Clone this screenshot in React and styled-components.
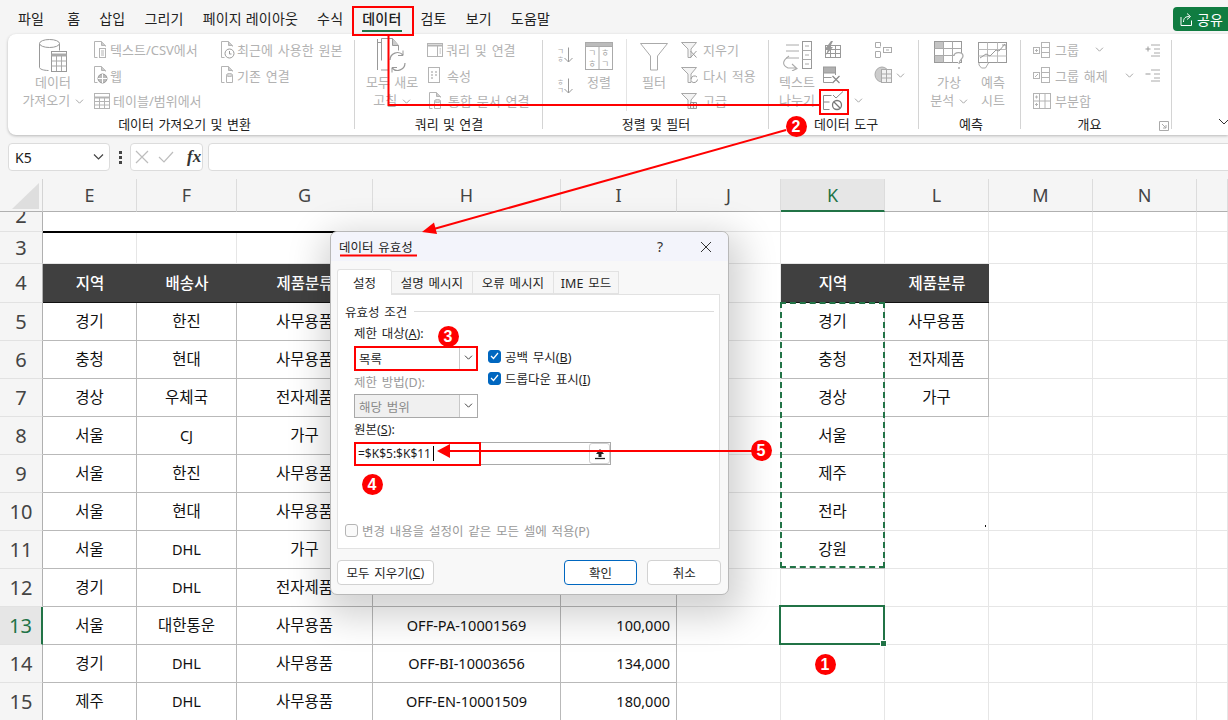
import React from 'react';
import styled, { createGlobalStyle } from 'styled-components';

const GlobalStyle = createGlobalStyle`
	html, body {
		margin: 0;
		height: 100%;
		overflow: hidden;
		background: #f5f5f5;
	}
	body {
		font-family: 'Noto Sans', 'Noto Sans CJK KR', sans-serif;
		color: #1a1a1a;
	}
`;

const Page = styled.div`
	position: relative;
	width: 1228px;
	height: 720px;
	overflow: hidden;
	background: #f5f5f5;
`;

/* ---------- menu ---------- */

const MenuBar = styled.nav`
	height: 34px;
	display: flex;
	align-items: flex-start;
	gap: 19px;
	padding-left: 18px;
	position: relative;
`;

const MenuItem = styled.span`
	font-size: 14px;
	letter-spacing: 0.2px;
	line-height: 38px;
	height: 33px;
	color: #222;
	position: relative;
	white-space: nowrap;
	&:first-child {
		margin-right: 4px;
	}
	${(p) => p.$active && `
		color: #1c1c1c;
		font-weight: 500;
		&::after {
			content: '';
			position: absolute;
			left: 0;
			right: 0;
			bottom: 1px;
			height: 2px;
			background: #217346;
		}
	`}
`;

const ShareButton = styled.div`
	position: absolute;
	left: 1173px;
	top: 7px;
	width: 70px;
	height: 24px;
	background: #107c41;
	border-radius: 4px;
	display: flex;
	align-items: center;
	gap: 3px;
	padding-left: 5px;
	color: #fff;
	font-size: 14px;
`;

/* ---------- ribbon ---------- */

const Ribbon = styled.section`
	margin-left: 8px;
	height: 101px;
	background: #fff;
	border-radius: 8px 0 0 8px;
	box-shadow: 0 1px 3px rgba(0, 0, 0, 0.25);
	display: flex;
	position: relative;
`;

const Group = styled.div`
	width: ${(p) => p.$w}px;
	flex: none;
	position: relative;
	display: flex;
	flex-direction: column;
	&::after {
		content: '';
		position: absolute;
		right: 0;
		top: 6px;
		bottom: 6px;
		width: 1px;
		background: #d4d4d4;
	}
`;

const Tools = styled.div`
	height: 76px;
	padding: 3px 0 0 ${(p) => p.$pad || 0}px;
	display: flex;
	align-items: flex-start;
`;

const GroupLabel = styled.div`
	text-align: center;
	font-size: 13px;
	word-spacing: 1px;
	line-height: 22px;
	color: #222;
	position: relative;
	left: ${(p) => p.$shift || 0}px;
`;

const BigTool = styled.div`
	width: ${(p) => p.$w}px;
	flex: none;
	display: flex;
	flex-direction: column;
	align-items: center;
	font-size: 13px;
	word-spacing: 1px;
	line-height: 17.5px;
	color: #b2b2b2;
	white-space: nowrap;
`;

const BigIcon = styled.div`
	height: 37px;
	display: flex;
	align-items: center;
	justify-content: center;
`;

const ToolColumn = styled.div`
	width: ${(p) => p.$w}px;
	padding-left: ${(p) => p.$pad || 0}px;
	flex: none;
	display: flex;
	flex-direction: column;
`;

const SortStack = styled.div`
	width: 20px;
	flex: none;
	padding-top: 10px;
	display: flex;
	flex-direction: column;
	gap: 15px;
`;

const SmallTool = styled.div`
	height: 25.5px;
	display: flex;
	align-items: center;
	gap: ${(p) => p.$gap ?? 4}px;
	font-size: 13px;
	word-spacing: 1.5px;
	color: #b2b2b2;
	white-space: nowrap;
`;

const ChevronSlot = styled.span`
	display: flex;
	margin-left: ${(p) => p.$left}px;
`;

const ToolDivider = styled.div`
	width: 1px;
	height: 72px;
	background: #e4e4e4;
	margin: 2px 5px 0 5px;
	flex: none;
`;

const CornerMark = styled.svg`
	position: absolute;
	right: 3px;
	bottom: 4px;
`;

const CollapseMark = styled.svg`
	position: absolute;
	left: 1210px;
	top: 84px;
`;

/* ---------- formula bar ---------- */

const FormulaBar = styled.div`
	height: 28px;
	margin-top: 8px;
	display: flex;
	align-items: center;
	padding-left: 8px;
`;

const BarBox = styled.div`
	height: 28px;
	box-sizing: border-box;
	background: #fff;
	border: 1px solid #dcdcdc;
	border-radius: 4px;
	display: flex;
	align-items: center;
	width: ${(p) => p.$w}px;
	margin-left: ${(p) => p.$left || 0}px;
	flex: none;
`;

const NameText = styled.span`
	font-size: 14px;
	padding-left: 6px;
	flex: 1;
`;

const BarDots = styled.div`
	width: 20px;
	flex: none;
	display: flex;
	flex-direction: column;
	align-items: center;
	gap: 2px;
	& i {
		width: 3px;
		height: 3px;
		background: #444;
	}
`;

const FxText = styled.span`
	font-family: 'Liberation Serif', serif;
	font-style: italic;
	font-size: 17px;
	font-weight: 700;
	color: #333;
	margin-left: 12px;
`;

/* ---------- sheet ---------- */

const Sheet = styled.div`
	margin-top: 8px;
	display: grid;
	grid-template-columns: 43px 94px 100px 136px 188px 116px 104px 104px 104px 104px 104px 31px;
	grid-template-rows: 33px 20px 32px 39px repeat(11, 38px);
`;

const Corner = styled.div`
	position: relative;
	border-bottom: 1px solid #b0b0b0;
	border-right: 1px solid #d4d4d4;
	box-sizing: border-box;
	&::before {
		content: '';
		position: absolute;
		left: 12px;
		top: 4px;
		width: 27px;
		height: 26px;
		background: #dedede;
		clip-path: polygon(100% 0, 100% 100%, 0 100%);
	}
`;

const ColHead = styled.div`
	box-sizing: border-box;
	display: flex;
	align-items: center;
	justify-content: center;
	font-size: 18px;
	color: ${(p) => (p.$on ? '#217346' : '#444')};
	background: ${(p) => (p.$on ? '#e6e6e6' : 'transparent')};
	border-right: 1px solid #dcdcdc;
	border-bottom: ${(p) => (p.$on ? '2px solid #217346' : '1px solid #b0b0b0')};
`;

const RowHead = styled.div`
	box-sizing: border-box;
	display: flex;
	align-items: ${(p) => (p.$clip ? 'flex-end' : 'center')};
	justify-content: center;
	overflow: hidden;
	font-size: 20px;
	line-height: 24px;
	padding-bottom: ${(p) => (p.$clip ? 3 : 0)}px;
	color: ${(p) => (p.$on ? '#217346' : '#444')};
	background: ${(p) => (p.$on ? '#e6e6e6' : 'transparent')};
	border-bottom: 1px solid #e2e2e2;
	border-right: ${(p) => (p.$on ? '2px solid #217346' : '1px solid #b0b0b0')};
`;

const borderColors = { plain: '#e6e6e6', table: '#b9b9b9' };

const Cell = styled.div`
	box-sizing: border-box;
	position: relative;
	display: flex;
	align-items: center;
	justify-content: ${(p) => (p.$right ? 'flex-end' : 'center')};
	padding-right: ${(p) => (p.$right ? 6 : 0)}px;
	font-size: ${(p) => (p.$hangul ? 15.5 : 14.5)}px;
	color: #111;
	white-space: nowrap;
	background: #fff;
	border-right: 1px solid ${(p) => borderColors[p.$tone]};
	border-bottom: 1px solid ${(p) => borderColors[p.$tone]};
	padding-bottom: 2px;
`;

const HeadCell = styled(Cell)`
	background: #404040;
	color: #fff;
	font-weight: 500;
	border-right: none;
	border-bottom: 1px solid #111;
`;

const TitleRule = styled.div`
	grid-column: span 5;
	background: #fff;
	border-bottom: 2px solid #000;
	box-sizing: border-box;
	height: 21px;
	position: relative;
	z-index: 1;
`;

const MarchingAnts = styled.div`
	position: absolute;
	left: -1px;
	top: -1px;
	width: 105px;
	height: 266px;
	box-sizing: border-box;
	border: 2px dashed #217346;
	z-index: 2;
`;

const ActiveCell = styled.div`
	position: absolute;
	left: -2px;
	top: -2px;
	width: 106px;
	height: 40px;
	box-sizing: border-box;
	border: 2px solid #217346;
	z-index: 2;
	&::after {
		content: '';
		position: absolute;
		right: -4px;
		bottom: -4px;
		width: 5px;
		height: 5px;
		background: #217346;
		border: 1px solid #fff;
	}
`;

const StrayDot = styled.span`
	position: absolute;
	right: 2px;
	top: 32px;
	width: 1.5px;
	height: 2px;
	background: #111;
`;

/* ---------- dialog ---------- */

const Dialog = styled.div`
	position: absolute;
	left: 330px;
	top: 231px;
	width: 399px;
	height: 364px;
	box-sizing: border-box;
	background: #f8f8f8;
	border: 1px solid #b8b8b8;
	border-radius: 7px;
	box-shadow: 3px 12px 36px 10px rgba(0, 0, 0, 0.18);
	z-index: 5;
	display: flex;
	flex-direction: column;
	font-size: 12.5px;
	word-spacing: 1.5px;
	color: #1f1f1f;
`;

const TitleBar = styled.div`
	height: 29px;
	flex: none;
	background: #f3f4fb;
	border-radius: 7px 7px 0 0;
	display: flex;
	align-items: center;
	padding: 0 16px 0 8px;
`;

const TitleText = styled.span`
	flex: 1;
`;

const HelpMark = styled.span`
	font-size: 14px;
	margin-right: 37px;
	color: #333;
`;

const TabRow = styled.div`
	display: flex;
	align-items: flex-end;
	height: 33px;
	padding-left: 6px;
	flex: none;
`;

const Tab = styled.div`
	width: ${(p) => p.$w}px;
	box-sizing: border-box;
	height: ${(p) => (p.$active ? 26 : 23)}px;
	display: flex;
	align-items: center;
	justify-content: center;
	background: ${(p) => (p.$active ? '#fff' : '#f6f6f6')};
	border: 1px solid #e2e2e2;
	border-bottom: ${(p) => (p.$active ? 'none' : '1px solid #e2e2e2')};
	border-left: ${(p) => (p.$active ? '1px solid #e2e2e2' : 'none')};
	border-radius: ${(p) => (p.$active ? '3px 3px 0 0' : '0')};
	margin-bottom: ${(p) => (p.$active ? -1 : 0)}px;
	position: relative;
	z-index: ${(p) => (p.$active ? 1 : 0)};
`;

const TabPanel = styled.div`
	margin-left: 6px;
	width: 383px;
	height: 255px;
	flex: none;
	box-sizing: border-box;
	background: #fff;
	border: 1px solid #e2e2e2;
	padding: 6px 5px 8px 7px;
	display: flex;
	flex-direction: column;
`;

const Legend = styled.div`
	height: 20px;
	display: flex;
	align-items: center;
	gap: 7px;
	&::after {
		content: '';
		flex: 1;
		height: 1px;
		background: #dcdcdc;
	}
`;

const FieldLabel = styled.label`
	display: block;
	height: 20px;
	line-height: 20px;
	margin-left: 9px;
	color: ${(p) => (p.$off ? '#9a9a9a' : '#1f1f1f')};
	margin-top: ${(p) => p.$top || 0}px;
`;

const Columns = styled.div`
	display: flex;
	margin-top: 2px;
	margin-left: 9px;
`;

const LeftColumn = styled.div`
	width: 134px;
	flex: none;
	& ${FieldLabel} {
		margin-left: 0;
	}
`;

const RightColumn = styled.div`
	display: flex;
	flex-direction: column;
	margin-top: -1px;
`;

const Select = styled.div`
	width: 124px;
	height: 24px;
	box-sizing: border-box;
	border: 1px solid #a9a9a9;
	background: ${(p) => (p.$off ? '#f0f0f0' : '#fff')};
	color: ${(p) => (p.$off ? '#8a8a8a' : '#1f1f1f')};
	display: flex;
	align-items: center;
	padding-left: 4px;
	margin-top: ${(p) => p.$top || 0}px;
`;

const SelectText = styled.span`
	flex: 1;
`;

const SelectArrow = styled.span`
	width: 17px;
	height: 100%;
	background: #fff;
	border-left: 1px solid #c8c8c8;
	display: flex;
	align-items: center;
	justify-content: center;
`;

const CheckRow = styled.div`
	height: 22px;
	display: flex;
	align-items: center;
	gap: 4px;
	color: ${(p) => (p.$off ? '#9a9a9a' : '#1f1f1f')};
`;

const CheckBox = styled.span`
	width: 13px;
	height: 13px;
	box-sizing: border-box;
	border-radius: 3px;
	flex: none;
	display: flex;
	align-items: center;
	justify-content: center;
	background: ${(p) => (p.$on ? '#0067c0' : '#fafafa')};
	border: 1px solid ${(p) => (p.$on ? '#0067c0' : '#b5b5b5')};
`;

const SourceInput = styled.div`
	margin: 2px 0 0 9px;
	width: 257px;
	height: 23px;
	box-sizing: border-box;
	border: 1px solid #a9a9a9;
	display: flex;
	align-items: center;
	padding-left: 3px;
	font-size: 12px;
`;

const SourceText = styled.span`
	flex: 1;
	display: flex;
	align-items: center;
	&::after {
		content: '';
		width: 1px;
		height: 15px;
		background: #000;
		margin-left: 2px;
	}
`;

const PickerButton = styled.span`
	width: 21px;
	height: 100%;
	box-sizing: border-box;
	background: #fff;
	border: 1px solid #d0d0d0;
	border-radius: 3px;
	display: flex;
	align-items: center;
	justify-content: center;
`;

const ApplyRow = styled(CheckRow)`
	margin-top: auto;
	height: 20px;
`;

const DialogFooter = styled.div`
	display: flex;
	padding: 11px 7px 0 6px;
	gap: 10px;
`;

const DialogButton = styled.div`
	width: ${(p) => p.$w}px;
	height: 25px;
	box-sizing: border-box;
	background: #fff;
	border: 1px solid ${(p) => (p.$primary ? '#0067c0' : '#d2d2d2')};
	border-radius: 4px;
	display: flex;
	align-items: center;
	justify-content: center;
	margin-right: ${(p) => p.$gapAfter || 0}px;
`;

/* ---------- annotations ---------- */

const Annotations = styled.svg`
	position: absolute;
	left: 0;
	top: 0;
	z-index: 10;
	pointer-events: none;
`;

const Badge = styled.span.attrs((p) => ({
	style: { left: p.$x - 10.5, top: p.$y - 10.5 },
}))`
	position: absolute;
	width: 21px;
	height: 21px;
	border-radius: 50%;
	background: #f00;
	color: #fff;
	font-family: 'Liberation Sans', sans-serif;
	font-weight: 700;
	font-size: 16px;
	line-height: 21px;
	text-align: center;
	z-index: 11;
`;

/* ---------- icons ---------- */

const G = '#b4b4b4';

const Icon = ({ w, h, children, stroke = G }) => (
	<svg width={w} height={h} viewBox={`0 0 ${w} ${h}`} fill="none" stroke={stroke} strokeWidth="1">
		{children}
	</svg>
);

const Chevron = ({ color = '#a8a8a8', size = 9 }) => (
	<svg width={size} height={size * 0.6} viewBox="0 0 9 5.4" fill="none" stroke={color} strokeWidth="1">
		<path d="M1 .7l3.5 3.5L8 .7" />
	</svg>
);

const DocBase = ({ children }) => (
	<Icon w={16} h={18}>
		<path d="M2.5.5h7l4 4v1M2.5.5v16h3" />
		<path d="M9.5.5v4h4" fill="#ccc" />
		{children}
	</Icon>
);

const TextDoc = () => (
	<DocBase>
		<rect x="7.5" y="7.5" width="6" height="9" />
		<path d="M9 10h3M9 12h3M9 14h3" />
	</DocBase>
);

const WebDoc = () => (
	<DocBase>
		<circle cx="10.5" cy="12.5" r="4.5" fill="#bbb" stroke="#999" />
		<path d="M6 12.5h9M10.5 8v9" stroke="#fff" />
	</DocBase>
);

const ClockDoc = () => (
	<DocBase>
		<circle cx="10.5" cy="12.5" r="4.5" fill="#fff" stroke="#999" />
		<path d="M10.5 10v3h2" stroke="#999" />
	</DocBase>
);

const LinkDoc = () => (
	<DocBase>
		<path d="M7.5 9.5h6v7h-6z" fill="#fff" />
		<ellipse cx="10.5" cy="9" rx="3" ry="1.5" fill="#ddd" />
	</DocBase>
);

const MiniTable = () => (
	<Icon w={20} h={16}>
		<rect x="2.5" y=".5" width="15" height="15" />
		<path d="M2.5 4.5h15" strokeWidth="2" />
		<path d="M2.5 8.5h15M2.5 12h15M7.5 4.5v11M12.5 4.5v11" />
	</Icon>
);

const DatabaseIcon = () => (
	<Icon w={30} h={35}>
		<path d="M1.5 5.5v24c0 1.5 4 3 9 3" stroke="#999" />
		<path d="M21.5 5.5v7" stroke="#999" />
		<ellipse cx="11.5" cy="5.5" rx="10" ry="4" stroke="#999" fill="#fff" />
		<rect x="13.5" y="13.5" width="15" height="20" fill="#fff" stroke="#999" />
		<path d="M13.5 17h15" strokeWidth="3" stroke="#aaa" />
		<path d="M13.5 23h15M13.5 28h15M18.5 18v15M23.5 18v15" stroke="#aaa" />
	</Icon>
);

const RefreshIcon = () => (
	<Icon w={32} h={36}>
		<path d="M1.5 1v31M5 4.5h-3.500M5 32h8" stroke="#999" />
		<path d="M5.5 .5h11l6 7v5M5.5 .5v22" stroke="#999" />
		<path d="M16.5 .5v7h6" stroke="#999" fill="#ccc" />
		<path d="M14 22a7.500 7.500 0 0 1 13-5M29 25a7.500 7.500 0 0 1-13 5" stroke="#999" strokeWidth="1.2" />
		<path d="M27 12.5v5h-5M16 34.5v-5h5" stroke="#999" />
	</Icon>
);

const PaneIcon = () => (
	<Icon w={16} h={14}>
		<rect x=".5" y=".5" width="15" height="13" />
		<path d="M.5 2.5h15" strokeWidth="2" />
		<path d="M10.5 3v10M12.500 6h1.500M12.500 8h1.500M12.500 10h1.500" />
	</Icon>
);

const PropsIcon = () => (
	<Icon w={14} h={16}>
		<rect x="1.5" y=".5" width="11" height="15" />
		<path d="M4 5h2M8 5h2M4 8h2M8 8h2M4 11h2" stroke="#999" />
	</Icon>
);

const SortLetterIcon = ({ top, bottom }) => (
	<Icon w={16} h={16}>
		<text x="0" y="7" fontSize="7.5" fill="#aaa" stroke="none">{top}</text>
		<text x="0" y="15" fontSize="7.5" fill="#aaa" stroke="none">{bottom}</text>
		<path d="M11.5 .5v14.500M7.5 11l4 4 4-4" stroke="#999" />
	</Icon>
);

const SortBigIcon = () => (
	<Icon w={28} h={28}>
		<rect x=".5" y=".5" width="27" height="27" stroke="#aaa" />
		<rect x=".5" y=".5" width="27" height="4" fill="#bbb" stroke="#aaa" />
		<path d="M14 5v23" stroke="#aaa" />
		<text x="3" y="14" fontSize="9" fill="#aaa" stroke="none">ㄱ</text>
		<text x="3" y="25" fontSize="9" fill="#aaa" stroke="none">ㅎ</text>
		<text x="16" y="14" fontSize="9" fill="#aaa" stroke="none">ㅎ</text>
		<text x="16" y="25" fontSize="9" fill="#aaa" stroke="none">ㄱ</text>
	</Icon>
);

const FunnelBig = () => (
	<Icon w={28} h={30}>
		<path d="M.5 2.500h27L17.500 15v14h-7V15z" stroke="#aaa" />
	</Icon>
);

const FunnelSmall = ({ mark }) => (
	<Icon w={18} h={18}>
		<path d="M.5 1.5h15L10 8v8.500H7V8z" stroke="#a8a8a8" fill="#f4f4f4" />
		{mark === 'x' && <path d="M9.5 10l6 6.500M15.500 10l-6 6.500" stroke="#999" />}
		{mark === 'r' && <path d="M10 13a3.500 3.500 0 0 1 6-2M16.500 13.500a3.500 3.500 0 0 1-6 2" stroke="#999" />}
		{mark === 't' && <path d="M9.5 10.5h6v6h-6zM9.500 13.500h6M12.500 10.500v6" stroke="#999" fill="#eee" />}
	</Icon>
);

const TextColumnsIcon = () => (
	<Icon w={30} h={31}>
		<path d="M4 5h13M4 11h13M4 18h13" stroke="#aaa" />
		<rect x="20.5" y="1.5" width="9" height="27" stroke="#999" />
		<path d="M20.5 10.500h9M20.500 19.500h9M23 6h4M23 15h4M23 24h4" stroke="#aaa" />
		<path d="M7 16c-7 5-7 9-1 12h8M10 24l5 4.500-5 2.500" stroke="#aaa" strokeWidth="1.1" />
	</Icon>
);

const FlashIcon = () => (
	<Icon w={20} h={18}>
		<rect x="3.5" y="4.5" width="15" height="12" stroke="#999" />
		<path d="M3.5 8.500h15M3.500 12.500h15M8.500 4.500v12M13.500 4.500v12" stroke="#999" />
		<path d="M9 0L3 8h3l-2 6 7-8H8l3-6z" fill="#999" stroke="none" />
	</Icon>
);

const DuplicateIcon = () => (
	<Icon w={20} h={18}>
		<rect x="1.5" y="1" width="12" height="6" fill="#b0b0b0" stroke="#999" />
		<path d="M1.5 7v9.500h9M13.500 7v2M1.500 11.500h8" stroke="#999" />
		<path d="M10.5 10l7 7M17.500 10l-7 7" stroke="#888" strokeWidth="1.2" />
	</Icon>
);

const ValidationIcon = () => (
	<Icon w={24} h={20}>
		<path d="M1.5 4.500h8M1.500 4.500v14M1.500 11h6M1.500 18.500h6" stroke="#888" />
		<path d="M11 4l3 3 7-6.500" stroke="#888" />
		<circle cx="15" cy="14" r="4.5" stroke="#777" strokeWidth="1.3" />
		<path d="M12 11l6 6" stroke="#777" strokeWidth="1.3" />
	</Icon>
);

const ConsolidateIcon = () => (
	<Icon w={20} h={18}>
		<path d="M6.5 1.500h-5v5h5M1.500 10.500h5M1.500 10.500v6h5M6.500 1.500v4M6.500 11v5" stroke="#aaa" />
		<rect x="9.5" y="6.5" width="8" height="5" stroke="#aaa" />
		<path d="M12 9h3" stroke="#aaa" />
	</Icon>
);

const RelationIcon = () => (
	<Icon w={20} h={18}>
		<ellipse cx="8" cy="8.5" rx="7" ry="7.5" fill="#ccc" stroke="#aaa" />
		<rect x="7.5" y="3.5" width="10" height="13" fill="#f2f2f2" stroke="#aaa" />
		<path d="M7.5 8h10M7.500 12h10M12.500 3.500v13" stroke="#aaa" />
	</Icon>
);

const WhatIfIcon = () => (
	<Icon w={31} h={30}>
		<rect x=".5" y=".5" width="27" height="21" stroke="#999" />
		<path d="M.5 7.500h27M.5 14.500h27M9.500 .5v21M18.500 .5v21" stroke="#aaa" />
		<rect x="1" y="1" width="8" height="6" fill="#c4c4c4" stroke="none" />
		<rect x="1" y="15" width="8" height="6" fill="#c4c4c4" stroke="none" />
		<path d="M20 15c0-4 9-5 9 0 0 3-4 3.500-4 8" fill="#fff" stroke="#aaa" strokeWidth="1.3" />
		<circle cx="25" cy="27" r="1" fill="#aaa" stroke="none" />
	</Icon>
);

const ForecastIcon = () => (
	<Icon w={30} h={27}>
		<rect x=".5" y=".5" width="28" height="20" stroke="#999" />
		<path d="M.5 7.500h28M.5 14h28M9.500 .5v20M19.500 .5v20" stroke="#bbb" />
		<path d="M2 16l6-4 4 2 6-6 3 1 6-7" stroke="#999" />
		<path d="M24 3h4v4" stroke="#999" />
		<path d="M1 21v2l2.500 3h4l3-5" stroke="#aaa" />
	</Icon>
);

const GroupIcon = ({ sign }) => (
	<Icon w={18} h={16}>
		<rect x=".5" y="5.5" width="6" height="6" />
		<path d={sign === 'plus' ? 'M2 8.500h3M3.500 7v3' : 'M2 10l3-3'} />
		<rect x="8.5" y=".5" width="8" height="15" />
		<path d="M8.5 5.500h8M8.500 10.500h8M8.500 .5h4" />
	</Icon>
);

const SubtotalIcon = () => (
	<Icon w={18} h={16}>
		<rect x=".5" y=".5" width="17" height="15" />
		<path d="M.5 8h17M6.500 .5v15M12 .5v15" />
		<path d="M2 4h3M3.500 2.500v3M2 11.500h3M3.500 10v3" />
	</Icon>
);

const OutlineIcon = ({ plus }) => (
	<Icon w={16} h={14}>
		<path d={plus ? 'M.5 6h5M3 3.500v5' : 'M.5 6h5'} stroke="#999" />
		<path d="M6 2h9M9 6h6M9 10h6M6 13h9" stroke="#aaa" />
	</Icon>
);

const ShareIcon = () => (
	<Icon w={16} h={16} stroke="#fff">
		<path d="M3 6v8.500h10.500v-5" />
		<path d="M5.5 11c0-4 2-5.500 6-5.500M9 2.500l3.500 3L9 8.500" />
	</Icon>
);

const CheckMark = () => (
	<svg width="9" height="8" viewBox="0 0 9 8" fill="none" stroke="#fff" strokeWidth="1.2">
		<path d="M1 4l2.500 2.500L8 1" />
	</svg>
);

const PickerIcon = () => (
	<svg width="12" height="12" viewBox="0 0 12 12">
		<path d="M6 1L2 6h2.500v3h3V6H10z" fill="#222" />
		<path d="M1 10.500h10" stroke="#222" strokeWidth="1.3" />
	</svg>
);

/* ---------- data ---------- */

const columns = ['E', 'F', 'G', 'H', 'I', 'J', 'K', 'L', 'M', 'N', ''];

const sheetRows = {
	4: { E: '지역', F: '배송사', G: '제품분류', K: '지역', L: '제품분류' },
	5: { E: '경기', F: '한진', G: '사무용품', K: '경기', L: '사무용품' },
	6: { E: '충청', F: '현대', G: '사무용품', K: '충청', L: '전자제품' },
	7: { E: '경상', F: '우체국', G: '전자제품', K: '경상', L: '가구' },
	8: { E: '서울', F: 'CJ', G: '가구', K: '서울' },
	9: { E: '서울', F: '한진', G: '사무용품', K: '제주' },
	10: { E: '서울', F: '현대', G: '사무용품', K: '전라' },
	11: { E: '서울', F: 'DHL', G: '가구', K: '강원' },
	12: { E: '경기', F: 'DHL', G: '전자제품' },
	13: { E: '서울', F: '대한통운', G: '사무용품', H: 'OFF-PA-10001569', I: '100,000' },
	14: { E: '경기', F: 'DHL', G: '사무용품', H: 'OFF-BI-10003656', I: '134,000' },
	15: { E: '제주', F: 'DHL', G: '사무용품', H: 'OFF-EN-10001509', I: '180,000' },
};

const isHead = (row, col) => row === 4 && ['E', 'F', 'G', 'H', 'I', 'K', 'L'].includes(col);

const isTable = (row, col) => {
	if (['E', 'F', 'G', 'H', 'I'].includes(col)) return row >= 5;
	if (col === 'K') return row >= 5 && row <= 11;
	if (col === 'L') return row >= 5 && row <= 7;
	return false;
};

const hasHangul = (text) => /[가-힣]/.test(text || '');

const menus = ['파일', '홈', '삽입', '그리기', '페이지 레이아웃', '수식', '데이터', '검토', '보기', '도움말'];

const SheetCells = ({ row }) =>
	columns.map((col, i) => {
		const text = sheetRows[row]?.[col];
		if (isHead(row, col)) {
			return <HeadCell key={i} $tone="plain" $hangul>{text}</HeadCell>;
		}
		return (
			<Cell key={i} $tone={isTable(row, col) ? 'table' : 'plain'} $right={col === 'I'} $hangul={hasHangul(text)}>
				{text}
				{row === 5 && col === 'K' && <MarchingAnts />}
				{row === 13 && col === 'K' && <ActiveCell />}
				{row === 10 && col === 'L' && <StrayDot />}
			</Cell>
		);
	});

const App = () => {
	return (
		<Page>
			<GlobalStyle />
			<MenuBar>
				{menus.map((m) => (
					<MenuItem key={m} $active={m === '데이터'}>{m}</MenuItem>
				))}
				<ShareButton>
					<ShareIcon />
					공유
				</ShareButton>
			</MenuBar>

			<Ribbon>
				<Group $w={347}>
					<Tools $pad={10}>
						<BigTool $w={70}>
							<BigIcon><DatabaseIcon /></BigIcon>
							데이터
							<span>가져오기 <Chevron /></span>
						</BigTool>
						<ToolColumn $w={127} $pad={4}>
							<SmallTool $gap={2}><TextDoc />텍스트/CSV에서</SmallTool>
							<SmallTool $gap={2}><WebDoc />웹</SmallTool>
							<SmallTool $gap={1}><MiniTable />테이블/범위에서</SmallTool>
						</ToolColumn>
						<ToolColumn $w={135}>
							<SmallTool $gap={2}><ClockDoc />최근에 사용한 원본</SmallTool>
							<SmallTool $gap={2}><LinkDoc />기존 연결</SmallTool>
						</ToolColumn>
					</Tools>
					<GroupLabel $shift={3}>데이터 가져오기 및 변환</GroupLabel>
				</Group>

				<Group $w={188}>
					<Tools $pad={7}>
						<BigTool $w={60}>
							<BigIcon><RefreshIcon /></BigIcon>
							모두 새로
							<span>고침 <Chevron /></span>
						</BigTool>
						<ToolColumn $w={120} $pad={5}>
							<SmallTool $gap={3}><PaneIcon />쿼리 및 연결</SmallTool>
							<SmallTool $gap={6}><PropsIcon />속성</SmallTool>
							<SmallTool $gap={5}><LinkDoc />통합 문서 연결</SmallTool>
						</ToolColumn>
					</Tools>
					<GroupLabel>쿼리 및 연결</GroupLabel>
				</Group>

				<Group $w={226}>
					<Tools $pad={14}>
						<SortStack>
							<SortLetterIcon top="ㄱ" bottom="ㅎ" />
							<SortLetterIcon top="ㅎ" bottom="ㄱ" />
						</SortStack>
						<BigTool $w={44}>
							<BigIcon><SortBigIcon /></BigIcon>
							정렬
						</BigTool>
						<ToolDivider />
						<BigTool $w={44}>
							<BigIcon><FunnelBig /></BigIcon>
							필터
						</BigTool>
						<ToolColumn $w={90} $pad={5}>
							<SmallTool><FunnelSmall mark="x" />지우기</SmallTool>
							<SmallTool><FunnelSmall mark="r" />다시 적용</SmallTool>
							<SmallTool><FunnelSmall mark="t" />고급</SmallTool>
						</ToolColumn>
					</Tools>
					<GroupLabel>정렬 및 필터</GroupLabel>
				</Group>

				<Group $w={150}>
					<Tools $pad={3}>
						<BigTool $w={50}>
							<BigIcon><TextColumnsIcon /></BigIcon>
							텍스트
							<span>나누기</span>
						</BigTool>
						<ToolColumn $w={52}>
							<SmallTool><FlashIcon /></SmallTool>
							<SmallTool><DuplicateIcon /></SmallTool>
							<SmallTool $gap={8}><ValidationIcon /><Chevron /></SmallTool>
						</ToolColumn>
						<ToolColumn $w={40}>
							<SmallTool><ConsolidateIcon /></SmallTool>
							<SmallTool $gap={2}><RelationIcon /><Chevron /></SmallTool>
						</ToolColumn>
					</Tools>
					<GroupLabel $shift={2}>데이터 도구</GroupLabel>
				</Group>

				<Group $w={102}>
					<Tools $pad={3}>
						<BigTool $w={54}>
							<BigIcon><WhatIfIcon /></BigIcon>
							가상
							<span>분석 <Chevron /></span>
						</BigTool>
						<BigTool $w={34}>
							<BigIcon><ForecastIcon /></BigIcon>
							예측
							<span>시트</span>
						</BigTool>
					</Tools>
					<GroupLabel $shift={1}>예측</GroupLabel>
				</Group>

				<Group $w={151}>
					<Tools $pad={12}>
						<ToolColumn $w={112}>
							<SmallTool>
								<GroupIcon sign="plus" />그룹
								<ChevronSlot $left={12}><Chevron /></ChevronSlot>
							</SmallTool>
							<SmallTool>
								<GroupIcon />그룹 해제
								<ChevronSlot $left={13}><Chevron /></ChevronSlot>
							</SmallTool>
							<SmallTool><SubtotalIcon />부분합</SmallTool>
						</ToolColumn>
						<ToolColumn $w={20}>
							<SmallTool><OutlineIcon plus /></SmallTool>
							<SmallTool><OutlineIcon /></SmallTool>
						</ToolColumn>
					</Tools>
					<GroupLabel $shift={-7}>개요</GroupLabel>
					<CornerMark width="10" height="10" viewBox="0 0 10 10" fill="none" stroke="#aaa">
						<path d="M.5 9.500v-9h9v9zM3 3l4 4M7 4v3H4" />
					</CornerMark>
				</Group>

				<CollapseMark width="12" height="8" viewBox="0 0 12 8" fill="none" stroke="#333">
					<path d="M1 1l5 5 5-5" />
				</CollapseMark>
			</Ribbon>

			<FormulaBar>
				<BarBox $w={102}>
					<NameText>K5</NameText>
					<svg width="20" height="8" viewBox="0 0 20 8" fill="none" stroke="#444" strokeWidth="1.2">
						<path d="M5 1.500l4.500 4.500L14 1.500" />
					</svg>
				</BarBox>
				<BarDots><i /><i /><i /></BarDots>
				<BarBox $w={73}>
					<svg width="44" height="14" viewBox="0 0 44 14" fill="none" stroke="#bdbdbd" strokeWidth="1.2">
						<path d="M5 1l12 12M17 1L5 13M28 7l5 5 9-10" />
					</svg>
					<FxText>fx</FxText>
				</BarBox>
				<BarBox $w={1030} $left={5} />
			</FormulaBar>

			<Sheet>
				<Corner />
				{columns.map((c, i) => (
					<ColHead key={i} $on={c === 'K'}>{c}</ColHead>
				))}

				<RowHead $clip>2</RowHead>
				<TitleRule />
				{columns.slice(5).map((c, i) => <Cell key={i} $tone="plain" />)}

				<RowHead>3</RowHead>
				<SheetCells row={3} />

				{Object.keys(sheetRows).map((row) => (
					<React.Fragment key={row}>
						<RowHead $on={row === '13'}>{row}</RowHead>
						<SheetCells row={Number(row)} />
					</React.Fragment>
				))}
			</Sheet>

			<Dialog>
				<TitleBar>
					<TitleText>데이터 유효성</TitleText>
					<HelpMark>?</HelpMark>
					<svg width="12" height="12" viewBox="0 0 12 12" fill="none" stroke="#333">
						<path d="M1 1l10 10M11 1L1 11" />
					</svg>
				</TitleBar>
				<TabRow>
					<Tab $active $w={55}>설정</Tab>
					<Tab $w={81}>설명 메시지</Tab>
					<Tab $w={81}>오류 메시지</Tab>
					<Tab $w={65}>IME 모드</Tab>
				</TabRow>
				<TabPanel>
					<Legend>유효성 조건</Legend>
					<FieldLabel $top={3}>제한 대상(<u>A</u>):</FieldLabel>
					<Columns>
						<LeftColumn>
							<Select>
								<SelectText>목록</SelectText>
								<SelectArrow><Chevron color="#444" /></SelectArrow>
							</Select>
							<FieldLabel $off $top={3}>제한 방법(D):</FieldLabel>
							<Select $off $top={1}>
								<SelectText>해당 범위</SelectText>
								<SelectArrow><Chevron color="#444" /></SelectArrow>
							</Select>
						</LeftColumn>
						<RightColumn>
							<CheckRow>
								<CheckBox $on><CheckMark /></CheckBox>
								<span>공백 무시(<u>B</u>)</span>
							</CheckRow>
							<CheckRow>
								<CheckBox $on><CheckMark /></CheckBox>
								<span>드롭다운 표시(<u>I</u>)</span>
							</CheckRow>
						</RightColumn>
					</Columns>
					<FieldLabel $top={2}>원본(<u>S</u>):</FieldLabel>
					<SourceInput>
						<SourceText>=$K$5:$K$11</SourceText>
						<PickerButton><PickerIcon /></PickerButton>
					</SourceInput>
					<ApplyRow $off>
						<CheckBox />
						<span>변경 내용을 설정이 같은 모든 셀에 적용(P)</span>
					</ApplyRow>
				</TabPanel>
				<DialogFooter>
					<DialogButton $w={97} $gapAfter={120}>모두 지우기(<u>C</u>)</DialogButton>
					<DialogButton $w={74} $primary>확인</DialogButton>
					<DialogButton $w={74}>취소</DialogButton>
				</DialogFooter>
			</Dialog>

			<Annotations width="1228" height="720" viewBox="0 0 1228 720" fill="none" stroke="#f00" strokeWidth="2">
				<rect x="353" y="7" width="60" height="28" />
				<path d="M388.5 35v70H819" />
				<rect x="820" y="90" width="28" height="24" />
				<path d="M786 130L432 229.5" />
				<polygon points="422,232 437,234 434,222.5" fill="#f00" stroke="none" />
				<path d="M340 255.5h77" />
				<rect x="355" y="347" width="122" height="23" />
				<rect x="355" y="443" width="125" height="22" />
				<path d="M752 451H449" />
				<polygon points="437,451 450,444 450,458" fill="#f00" stroke="none" />
			</Annotations>
			<Badge $x={825} $y={664}>1</Badge>
			<Badge $x={796} $y={126}>2</Badge>
			<Badge $x={448} $y={336}>3</Badge>
			<Badge $x={372} $y={484}>4</Badge>
			<Badge $x={761} $y={450}>5</Badge>
		</Page>
	);
};

export default App;
